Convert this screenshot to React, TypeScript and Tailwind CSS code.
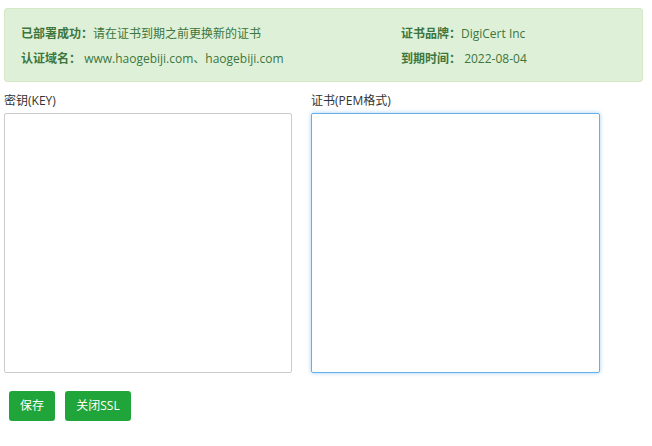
export default function App() {
  const f = { fontFamily: '"Open Sans","Noto Sans CJK SC",sans-serif' };
  return (
    <div className="w-[652px] h-[446px] bg-white text-[12px]" style={f}>
      <div className="pt-[8px] px-[4px] pr-[9px]">
        <div className="h-[74px] bg-[#dff0d8] border border-[#d6e9c6] rounded-[3px] text-[#3c763d] flex flex-col justify-center gap-[7px] pl-[16px] pt-[3px]">
          <div className="flex h-[18px] items-center">
            <div className="w-[380px]"><b>已部署成功：</b>请在证书到期之前更换新的证书</div>
            <div><b>证书品牌：</b>DigiCert Inc</div>
          </div>
          <div className="flex h-[18px] items-center">
            <div className="w-[380px]"><b>认证域名：</b> www.haogebiji.com、haogebiji.com</div>
            <div><b>到期时间：</b> 2022-08-04</div>
          </div>
        </div>
      </div>
      <div className="flex gap-[19px] pl-[4px] mt-[11px] text-[#333]">
        <div className="flex flex-col">
          <div className="h-[16px] leading-[16px] mb-[4px]">密钥(KEY)</div>
          <textarea className="w-[288px] h-[260px] border border-[#ccc] rounded-[2px] resize-none outline-none" />
        </div>
        <div className="flex flex-col">
          <div className="h-[16px] leading-[16px] mb-[4px]">证书(PEM格式)</div>
          <textarea className="w-[289px] h-[260px] border border-[#66afe9] rounded-[2px] resize-none outline-none shadow-[0_0_4px_rgba(102,175,233,0.6)]" />
        </div>
      </div>
      <div className="flex gap-[10px] pl-[9px] mt-[18px]">
        <button className="w-[46px] h-[30px] bg-[#20a53a] text-white rounded-[3px] text-[12px]">保存</button>
        <button className="w-[66px] h-[30px] bg-[#20a53a] text-white rounded-[3px] text-[12px]">关闭SSL</button>
      </div>
    </div>
  );
}
